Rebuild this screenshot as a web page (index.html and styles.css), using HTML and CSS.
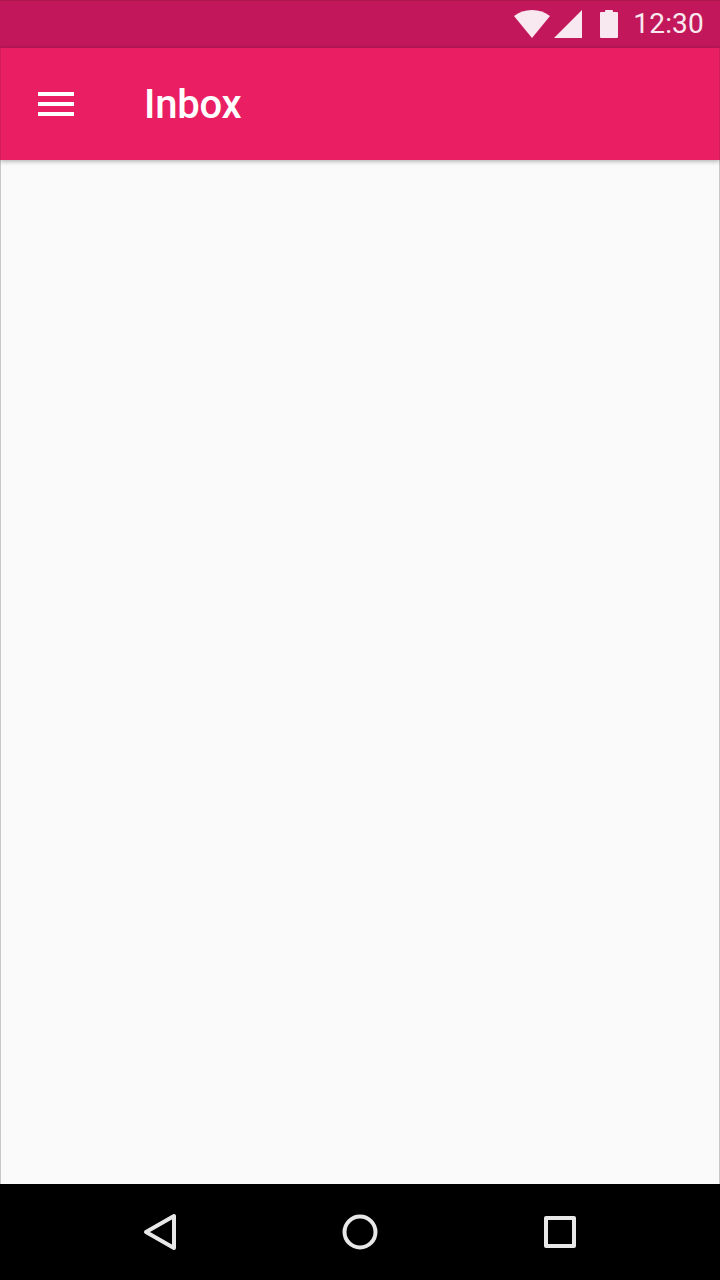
FILE: index.html
```html
<!DOCTYPE html>
<html lang="en">
<head>
    <meta charset="UTF-8">
    <meta name="viewport" content="width=device-width, initial-scale=1.0">
    <title>Inbox</title>
    <link rel="stylesheet" href="styles.css">
</head>
<body>
    <div class="status-bar">
        <svg class="wifi-icon" width="36" height="28" viewBox="0 0 36 28">
            <path d="M18 28 L0 6 C5 2 11 0 18 0 C25 0 31 2 36 6 Z"/>
        </svg>
        <svg class="signal-icon" width="28" height="28" viewBox="0 0 28 28">
            <path d="M0 28 L28 0 V28 Z"/>
        </svg>
        <svg class="battery-icon" width="18" height="28" viewBox="0 0 18 28">
            <path d="M5 2 V1 Q5 0 6 0 H12 Q13 0 13 1 V2 H17 Q18 2 18 3 V27 Q18 28 17 28 H1 Q0 28 0 27 V3 Q0 2 1 2 Z"/>
        </svg>
        <span class="clock">12:30</span>
    </div>

    <header class="app-bar">
        <button class="menu-btn" type="button" aria-label="Menu">
            <span></span>
            <span></span>
            <span></span>
        </button>
        <h1>Inbox</h1>
    </header>

    <main class="content"></main>

    <nav class="nav-bar">
        <svg width="36" height="40" viewBox="0 0 36 40">
            <path class="nav-stroke" d="M32 4 V36 L4 20 Z"/>
        </svg>
        <svg width="36" height="36" viewBox="0 0 36 36">
            <circle class="nav-stroke" cx="18" cy="18" r="15.5"/>
        </svg>
        <svg width="36" height="36" viewBox="0 0 36 36">
            <rect class="nav-stroke" x="4" y="4" width="28" height="28"/>
        </svg>
    </nav>
</body>
</html>
```

FILE: styles.css
```css
* {
    box-sizing: border-box;
}

body {
    margin: 0;
    height: 1280px;
    display: flex;
    flex-direction: column;
    font-family: Roboto, sans-serif;
    background-color: #fafafa;
    overflow: hidden;
}

.status-bar {
    height: 48px;
    flex-shrink: 0;
    display: flex;
    align-items: center;
    justify-content: flex-end;
    padding-right: 16px;
    padding-bottom: 1px;
    background-color: #c2185b;
    border-top: 1px solid #b0174f;
}

.status-bar svg {
    fill: #f8e8ef;
}

.signal-icon {
    margin-left: 4px;
}

.battery-icon {
    margin-left: 18px;
}

.clock {
    margin-left: 15px;
    font-size: 28px;
    line-height: 46px;
    letter-spacing: 0.2px;
    color: #f8e8ef;
}

.app-bar {
    height: 112px;
    flex-shrink: 0;
    display: flex;
    align-items: center;
    padding-left: 37px;
    background-color: #e91e63;
    border-left: 1px solid #d21c5a;
    border-right: 1px solid #d21c5a;
    box-shadow: 0 1px 5px rgba(0, 0, 0, 0.35);
    position: relative;
}

.menu-btn {
    width: 36px;
    height: 24px;
    padding: 0;
    border: none;
    background: none;
    display: flex;
    flex-direction: column;
    justify-content: space-between;
}

.menu-btn span {
    display: block;
    height: 4px;
    background-color: #fff;
}

h1 {
    margin: 2px 0 0 70px;
    font-size: 40px;
    font-weight: 500;
    line-height: 48px;
    letter-spacing: -0.2px;
    color: #fff;
}

.content {
    flex: 1;
    background-color: #fafafa;
    border-left: 1px solid #c8c8c8;
    border-right: 1px solid #c8c8c8;
}

.nav-bar {
    height: 96px;
    flex-shrink: 0;
    display: flex;
    align-items: center;
    justify-content: center;
    gap: 164px;
    background-color: #000;
}

.nav-stroke {
    fill: none;
    stroke: #e8e8e8;
    stroke-width: 4;
    stroke-linejoin: round;
}
```
